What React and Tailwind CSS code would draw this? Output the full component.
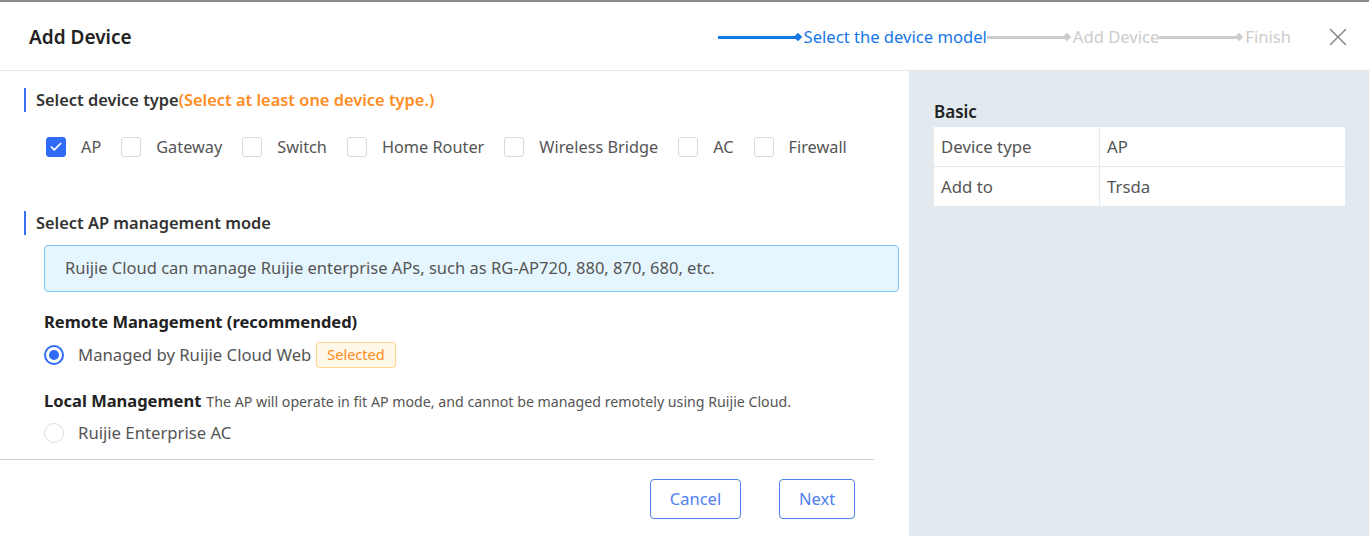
import React, { useState } from "react";
import { X, Check } from "lucide-react";

const deviceTypes = ["AP", "Gateway", "Switch", "Home Router", "Wireless Bridge", "AC", "Firewall"];

function StepLine({ active }) {
  return (
    <div className="flex items-center">
      <div className={`h-[3px] w-[80px] ${active ? "bg-[#1677e5]" : "bg-[#cccccc]"}`} />
      <div className={`w-[6px] h-[6px] rotate-45 -ml-[3px] ${active ? "bg-[#1677e5]" : "bg-[#cccccc]"}`} />
    </div>
  );
}

function SectionTitle({ children }) {
  return (
    <div className="flex items-center h-[24px] border-l-2 border-[#3b6ff5] pl-[10px] text-[16.4px] font-semibold text-[#333]">
      {children}
    </div>
  );
}

export default function App() {
  const [selected, setSelected] = useState(["AP"]);

  const toggle = (t) =>
    setSelected((s) => (s.includes(t) ? s.filter((x) => x !== t) : [...s, t]));

  return (
    <div className="w-[1369px] h-[536px] overflow-hidden bg-white flex flex-col" style={{ fontFamily: "'Noto Sans', 'Open Sans', sans-serif" }}>
      {/* top edge */}
      <div className="h-[2px] bg-[#8a8a8a] shrink-0" />

      {/* Header */}
      <div className="h-[69px] shrink-0 flex items-center border-b border-[#e8e8e8] pl-[29px] pr-[16px]">
        <div className="text-[19px] font-semibold text-[#222] mt-[2px]">Add Device</div>
        <div className="ml-auto flex items-center text-[16.6px] mt-[2px]">
          <StepLine active />
          <span className="text-[#1677e5] ml-[3px]">Select the device model</span>
          <StepLine />
          <span className="text-[#cccccc] ml-[3px]">Add Device</span>
          <StepLine />
          <span className="text-[#cccccc] ml-[3px]">Finish</span>
          <button className="ml-[32px] text-[#888]">
            <X size={30} strokeWidth={1.2} />
          </button>
        </div>
      </div>

      <div className="flex flex-1 min-h-0">
        {/* Left */}
        <div className="w-[909px] shrink-0 flex flex-col">
          <div className="pl-[24px] pr-[10px] pt-[17px]">
            <SectionTitle>
              Select device type<span className="text-[#ff8c1f]">(Select at least one device type.)</span>
            </SectionTitle>

            <div className="flex items-center mt-[23px] ml-[22px] h-[24px]">
              {deviceTypes.map((t) => {
                const on = selected.includes(t);
                return (
                  <label key={t} className="flex items-center mr-[20px] cursor-pointer" onClick={() => toggle(t)}>
                    <span
                      className={`w-[20px] h-[20px] rounded-[3px] flex items-center justify-center border ${
                        on ? "bg-[#2f6bf5] border-[#2f6bf5]" : "bg-white border-[#d9d9d9]"
                      }`}
                    >
                      {on && <Check size={14} strokeWidth={3} className="text-white" />}
                    </span>
                    <span className="ml-[15px] text-[16.3px] text-[#555]">{t}</span>
                  </label>
                );
              })}
            </div>

            <div className="mt-[52px]">
              <SectionTitle>Select AP management mode</SectionTitle>
            </div>

            <div className="ml-[20px] mt-[10px] h-[47px] border border-[#7cc4fa] bg-[#e6f6fe] rounded-[4px] flex items-center pl-[20px] text-[16.5px] text-[#555]">
              Ruijie Cloud can manage Ruijie enterprise APs, such as RG-AP720, 880, 870, 680, etc.
            </div>

            <div className="ml-[20px] mt-[18px] text-[16.5px] font-bold text-[#222] leading-[24px]">
              Remote Management (recommended)
            </div>
            <div className="ml-[20px] mt-[8px] flex items-center h-[26px]">
              <span className="w-[20px] h-[20px] rounded-full border-2 border-[#2f6bf5] flex items-center justify-center">
                <span className="w-[10px] h-[10px] rounded-full bg-[#2f6bf5]" />
              </span>
              <span className="ml-[14px] text-[16.7px] text-[#555]">Managed by Ruijie Cloud Web</span>
              <span className="ml-[5px] h-[26px] px-[10px] flex items-center rounded-[3px] border border-[#ffd591] bg-[#fff7e8] text-[14.5px] text-[#ff8c1f]">
                Selected
              </span>
            </div>

            <div className="ml-[20px] mt-[21px] flex items-baseline leading-[24px]">
              <span className="text-[16.5px] font-bold text-[#222]">Local Management</span>
              <span className="ml-[5px] text-[14.2px] text-[#555]">
                The AP will operate in fit AP mode, and cannot be managed remotely using Ruijie Cloud.
              </span>
            </div>
            <div className="ml-[20px] mt-[6px] flex items-center h-[26px]">
              <span className="w-[20px] h-[20px] rounded-full border border-[#dddddd] bg-white" />
              <span className="ml-[14px] text-[16.7px] text-[#555]">Ruijie Enterprise AC</span>
            </div>
          </div>

          <div className="mt-[13px] w-[874px] border-t border-[#cfcfcf]" />
          <div className="w-[874px] flex justify-end gap-[38px] pt-[19px] pr-[19px]">
            <button className="w-[91px] h-[40px] rounded-[4px] border border-[#4f7ff0] text-[#4f7ff0] text-[16.5px] bg-white">
              Cancel
            </button>
            <button className="w-[76px] h-[40px] rounded-[4px] border border-[#4f7ff0] text-[#4f7ff0] text-[16.5px] bg-white">
              Next
            </button>
          </div>
        </div>

        {/* Right */}
        <div className="flex-1 bg-[#e2eaf0] pl-[25px] pr-[23px] pt-[29px]">
          <div className="text-[17px] font-semibold text-[#222] leading-[24px]">Basic</div>
          <div className="mt-[3px] bg-white w-[411px]">
            <div className="flex h-[40px] border-b border-[#e2eaf0]">
              <div className="w-[166px] border-r border-[#e2eaf0] flex items-center pl-[7px] text-[16.8px] text-[#555]">Device type</div>
              <div className="flex-1 flex items-center pl-[7px] text-[16.8px] text-[#555]">AP</div>
            </div>
            <div className="flex h-[39px]">
              <div className="w-[166px] border-r border-[#e2eaf0] flex items-center pl-[7px] text-[16.8px] text-[#555]">Add to</div>
              <div className="flex-1 flex items-center pl-[7px] text-[16.8px] text-[#555]">Trsda</div>
            </div>
          </div>
        </div>
      </div>
    </div>
  );
}
